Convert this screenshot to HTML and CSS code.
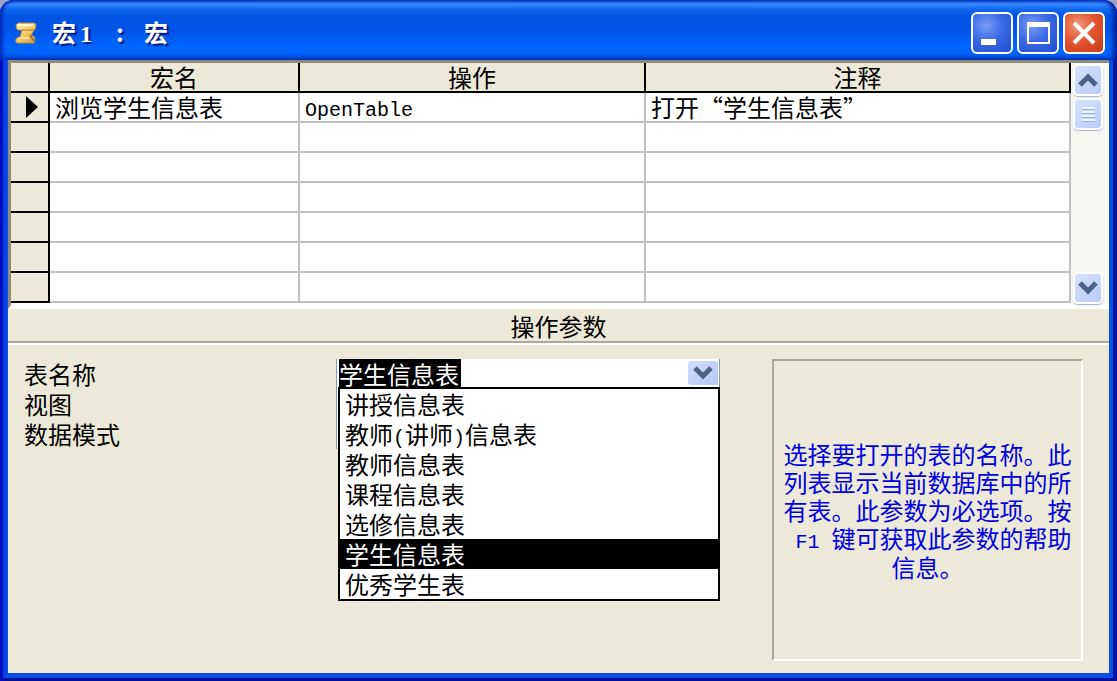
FILE: index.html
```html
<!DOCTYPE html>
<html lang="zh-CN">

<head>
    <meta charset="UTF-8" />
    <meta name="viewport" content="width=device-width, initial-scale=1.0" />
    <title>宏1 : 宏</title>
    <link rel="stylesheet" href="styles.css">
</head>

<body>

    <div class="window">
        <header class="title-bar">
            <svg class="title-icon" viewBox="0 0 24 24">
                <defs>
                    <linearGradient id="scroll" x1="0" y1="0" x2="1" y2="1">
                        <stop offset="0" stop-color="#fff0b0" />
                        <stop offset="0.5" stop-color="#f5cb6c" />
                        <stop offset="1" stop-color="#d39a34" />
                    </linearGradient>
                </defs>
                <path d="M4 2 H20 Q22 2 22 5 L21 8 L17 14 Q21 15 21 18 L20 22 H3 Q1 21 2 18 Q3 16 6 16 L8 9 H4 Q2 8 2 5 Q2 3 4 2Z" fill="url(#scroll)" stroke="#b98a3c" />
                <path d="M3 4 H19" stroke="#fff6cc" stroke-width="2" />
                <path d="M8 9 H20" stroke="#a8752a" />
                <path d="M16 14 L20 20" stroke="#a8752a" stroke-width="2" />
                <path d="M5 17 H15" stroke="#fbe29a" stroke-width="2" />
            </svg>
            <h1 class="title-text">宏<span class="number">1</span><span class="colon">:</span>宏</h1>
            <div class="title-buttons">
                <button type="button" class="title-btn" aria-label="最小化">
                    <svg viewBox="0 0 38 38"><rect x="8" y="25" width="15" height="6" fill="#fff" /></svg>
                </button>
                <button type="button" class="title-btn" aria-label="最大化">
                    <svg viewBox="0 0 38 38"><path d="M8 8h23v22H8z M10 13v15h19V13z" fill="#fff" fill-rule="evenodd" /></svg>
                </button>
                <button type="button" class="title-btn close" aria-label="关闭">
                    <svg viewBox="0 0 38 38"><path d="M9 9 L29 29 M29 9 L9 29" stroke="#fff" stroke-width="4" /></svg>
                </button>
            </div>
        </header>

        <main class="client">
            <section class="sheet">
                <table class="grid">
                    <colgroup>
                        <col class="col-mark">
                        <col class="col-name">
                        <col class="col-action">
                        <col>
                    </colgroup>
                    <thead>
                        <tr>
                            <th></th>
                            <th>宏名</th>
                            <th>操作</th>
                            <th>注释</th>
                        </tr>
                    </thead>
                    <tbody>
                        <tr>
                            <th><svg class="marker" viewBox="0 0 12 22"><path d="M0 0 L12 11 L0 22Z" /></svg></th>
                            <td>浏览学生信息表</td>
                            <td><span class="latin">OpenTable</span></td>
                            <td>打开“学生信息表”</td>
                        </tr>
                        <tr><th></th><td></td><td></td><td></td></tr>
                        <tr><th></th><td></td><td></td><td></td></tr>
                        <tr><th></th><td></td><td></td><td></td></tr>
                        <tr><th></th><td></td><td></td><td></td></tr>
                        <tr><th></th><td></td><td></td><td></td></tr>
                        <tr><th></th><td></td><td></td><td></td></tr>
                    </tbody>
                </table>
                <div class="scrollbar">
                    <button type="button" class="scroll-btn" aria-label="向上滚动">
                        <svg viewBox="0 0 20 14"><path d="M2 12 L10 4 L18 12" /></svg>
                    </button>
                    <div class="thumb"><i></i><i></i><i></i><i></i></div>
                    <button type="button" class="scroll-btn down" aria-label="向下滚动">
                        <svg viewBox="0 0 20 14"><path d="M2 2 L10 10 L18 2" /></svg>
                    </button>
                </div>
            </section>

            <h2 class="divider">操作参数</h2>

            <section class="params">
                <form class="fields">
                    <label for="tableName">表名称</label>
                    <div class="combo">
                        <select id="tableName" class="field current">
                            <option>学生信息表</option>
                        </select>
                        <span class="combo-arrow"><svg viewBox="0 0 20 14"><path d="M2 2 L10 10 L18 2" /></svg></span>
                        <ul class="options" role="listbox">
                            <li role="option">讲授信息表</li>
                            <li role="option">教师<span class="latin">(</span>讲师<span class="latin">)</span>信息表</li>
                            <li role="option">教师信息表</li>
                            <li role="option">课程信息表</li>
                            <li role="option">选修信息表</li>
                            <li role="option" class="active" aria-selected="true">学生信息表</li>
                            <li role="option">优秀学生表</li>
                        </ul>
                    </div>
                    <label for="view">视图</label>
                    <select id="view" class="field"></select>
                    <label for="dataMode">数据模式</label>
                    <select id="dataMode" class="field"></select>
                </form>
                <aside class="help">
                    <p>选择要打开的表的名称。此<br>列表显示当前数据库中的所<br>有表。此参数为必选项。按<br><span class="latin">&nbsp;F1&nbsp;</span>键可获取此参数的帮助<br>信息。</p>
                </aside>
            </section>
        </main>
    </div>

</body>

</html>
```

FILE: styles.css
```css
:root {
    --face: #ece9d8;
    --shadow: #aca899;
    --line: #c0c0c0;
    --arrow: #4d6185;
}

* {
    box-sizing: border-box;
    margin: 0;
    padding: 0;
}

body {
    background: #9aa3c4;
    color: #000;
    font-family: "Noto Sans CJK SC", sans-serif;
    font-size: 24px;
    line-height: 28px;
}

.latin {
    font-family: "Liberation Mono", monospace;
    font-size: 20px;
    line-height: 1;
}

.window {
    display: flex;
    flex-direction: column;
    min-height: 100vh;
    padding: 0 8px 8px;
    border-radius: 14px 14px 0 0;
    background: #0a4fe4;
    box-shadow: inset 3px 0 #0010c0, inset -4px -3px #00129c, inset 6px 0 #0a3ee0;
}

/* title bar */
.title-bar {
    display: flex;
    align-items: center;
    height: 60px;
    margin: 0 -8px;
    padding: 6px 12px 0 14px;
    border-radius: 14px 14px 0 0;
    background: linear-gradient(#0a50d8 0, #3c8cff 4px, #1268f0 9px, #0054e3 16px, #0055e8 32px, #0066ff 46px, #0062fa 54px, #0040c8 60px);
    box-shadow: inset 3px 0 3px #0030c0, inset -4px 0 4px #0020a0;
}

.title-icon {
    width: 24px;
    height: 24px;
    margin-right: 14px;
}

.title-text {
    flex: 1;
    color: #fff;
    font-size: 24px;
    font-weight: 700;
    text-shadow: 2px 2px 1px #0a1883;
}

.number {
    display: inline-block;
    width: 20px;
    font-family: "Liberation Serif", serif;
    text-align: center;
}

.colon {
    display: inline-block;
    width: 48px;
    text-align: center;
}

.title-buttons {
    display: flex;
    gap: 4px;
}

.title-btn {
    width: 42px;
    height: 42px;
    border: 2px solid #fff;
    border-radius: 6px;
    background: radial-gradient(circle at 35% 30%, #7a9cf5, #3b69e4 45%, #1e4ed0);
}

.title-btn.close {
    background: radial-gradient(circle at 35% 30%, #f09a80, #e25530 45%, #c63a14);
}

.title-btn svg {
    display: block;
    width: 100%;
    height: 100%;
}

/* client area */
.client {
    flex: 1;
    display: flex;
    flex-direction: column;
    background: var(--face);
}

.sheet {
    display: flex;
    padding-right: 4px;
    border-top: 3px solid #8e8c80;
    border-left: 3px solid #8e8c80;
    border-bottom: 4px solid #fff;
    background: #fff;
}

.grid {
    flex: 1;
    align-self: flex-start;
    table-layout: fixed;
    width: 100%;
    margin-bottom: 2px;
    border-spacing: 0;
    line-height: 24px;
}

.col-mark {
    width: 39px;
}

.col-name {
    width: 250px;
}

.col-action {
    width: 346px;
}

.grid th,
.grid td {
    height: 30px;
    border-right: 2px solid var(--line);
    border-bottom: 2px solid var(--line);
}

.grid th {
    border-color: #000;
    background: var(--face);
    font-weight: 400;
}

.grid td {
    padding-left: 5px;
    white-space: nowrap;
}

.marker {
    display: block;
    width: 12px;
    height: 22px;
    margin-left: 15px;
}

.scrollbar {
    display: flex;
    flex-direction: column;
    gap: 2px;
    width: 34px;
    padding: 1px 2px;
    background: #f7f6f0;
}

.scroll-btn,
.thumb {
    display: flex;
    align-items: center;
    justify-content: center;
    height: 32px;
    border: 2px solid #fff;
    border-radius: 5px;
    background: linear-gradient(135deg, #d6e2ff, #b9cbf8);
    box-shadow: 0 1px 1px #9fb4da;
}

.scroll-btn.down {
    margin-top: auto;
}

.scroll-btn svg,
.combo-arrow svg {
    width: 20px;
    height: 14px;
    fill: none;
    stroke: var(--arrow);
    stroke-width: 5;
}

.thumb {
    flex-direction: column;
    gap: 2px;
}

.thumb i {
    width: 13px;
    height: 2px;
    background: #eef4fe;
    box-shadow: 0 1px #8cb0f8;
}

.divider {
    height: 36px;
    border-bottom: 2px solid #fff;
    box-shadow: inset 0 -2px var(--shadow);
    font-size: 24px;
    font-weight: 400;
    line-height: 34px;
    text-align: center;
}

/* arguments */
.params {
    flex: 1;
    display: flex;
    align-items: stretch;
    gap: 52px;
    padding: 14px 26px 12px 16px;
}

.fields {
    flex: 1;
    display: grid;
    grid-template-columns: 312px 1fr;
    grid-auto-rows: 30px;
    line-height: 30px;
}

.combo {
    position: relative;
}

.field {
    display: block;
    width: 100%;
    height: 30px;
    padding-left: 2px;
    border: 0;
    border-left: 1px solid #7f9db9;
    background: #fff;
    appearance: none;
    font: inherit;
}

.field.current {
    border-right: 1px solid #7f9db9;
    background: linear-gradient(#000, #000) 2px 0 / 122px 100% no-repeat #fff;
    color: #fff;
}

.combo-arrow {
    position: absolute;
    top: 2px;
    right: 2px;
    display: flex;
    align-items: center;
    justify-content: center;
    width: 30px;
    height: 24px;
    border-radius: 3px;
    background: linear-gradient(135deg, #d0deff, #b5c8f6);
    pointer-events: none;
}

.options {
    position: absolute;
    top: 28px;
    left: 2px;
    right: 0;
    border: 2px solid #000;
    background: #fff;
    list-style: none;
}

.options li {
    height: 30px;
    padding-left: 5px;
}

.options .active {
    background: #000;
    color: #fff;
}

.help {
    display: flex;
    align-items: center;
    justify-content: center;
    width: 311px;
    border: 2px solid var(--shadow);
    border-right-color: #fff;
    border-bottom-color: #fff;
    color: #0000e0;
    text-align: center;
    white-space: nowrap;
}
```
